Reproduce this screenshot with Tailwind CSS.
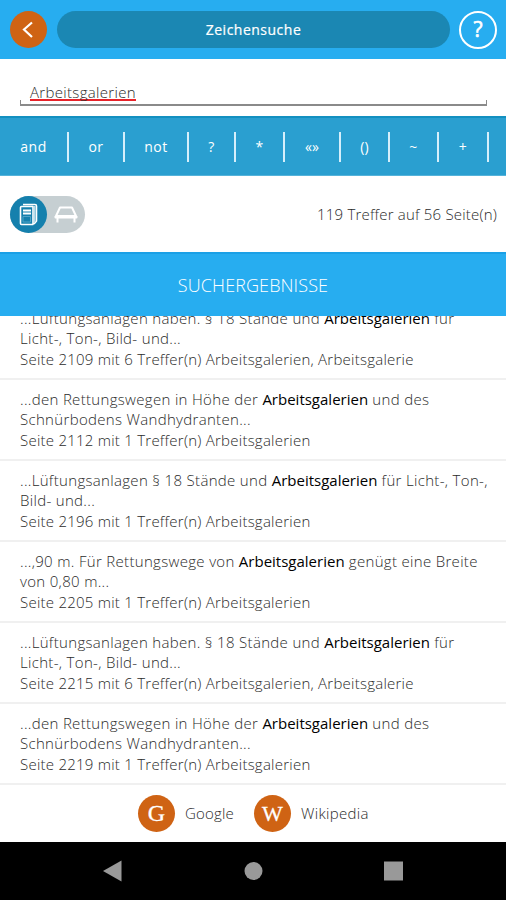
<!DOCTYPE html>
<html lang="de">
<head>
    <meta charset="UTF-8">
    <meta name="viewport" content="width=device-width, initial-scale=1.0">
    <title>Zeichensuche</title>
    <script src="https://cdn.jsdelivr.net/npm/@tailwindcss/browser@4"></script>
</head>
<body class="bg-white">
    <div class="flex h-[900px] w-[506px] flex-col overflow-hidden font-['Open_Sans',sans-serif] text-[15px] font-light tracking-[0.32px] text-[#2b2b2b]">
        <!-- Header -->
        <header class="flex h-[59px] shrink-0 items-center bg-[#27adf0] pl-[10px] pr-[9px] tracking-normal">
            <button class="flex size-[37px] items-center justify-center rounded-full bg-[#cf6314]">
                <svg class="size-[37px]" viewBox="0 0 37 37" fill="none" stroke="#fff" stroke-width="2.200"><path d="M22 11.500 14 18.500l8 7.500"/></svg>
            </button>
            <h1 class="ml-[10px] flex h-[37px] w-[393px] items-center justify-center rounded-full bg-[#1b87b3] text-[14px] font-normal tracking-[0.5px] text-white [-webkit-text-stroke:0.2px_#fff]">Zeichensuche</h1>
            <button class="ml-auto flex size-[38px] items-center justify-center rounded-full border-2 border-white text-[21px] font-normal text-white [-webkit-text-stroke:0.6px_#fff]">?</button>
        </header>

        <!-- Search field -->
        <div class="h-[57px] shrink-0 px-[20px] pt-[22px]">
            <div class="h-[24px] px-[10px] leading-[22px]"><span class="inline-block h-[20px] border-b-2 border-[#e8232a]">Arbeitsgalerien</span></div>
            <div class="-mt-[5px] h-[6px] w-[467px] border-x border-b-2 border-[#8a8a8a]"></div>
        </div>

        <!-- Operators -->
        <nav class="flex h-[60px] shrink-0 items-center border-b border-t-2 border-b-[#55b3da] border-t-[#1390c0] bg-[#2a9fd0] text-[14px] font-normal tracking-[0.5px] text-white *:flex *:h-[30px] *:items-center *:justify-center *:border-r-2 *:border-[#d5effb]">
            <button class="w-[69px]">and</button>
            <button class="w-[56px]">or</button>
            <button class="w-[64px]">not</button>
            <button class="w-[47px]">?</button>
            <button class="w-[49px]">*</button>
            <button class="w-[56px] tracking-normal">«»</button>
            <button class="w-[49px] tracking-normal">()</button>
            <button class="w-[49px]">~</button>
            <button class="w-[50px]">+</button>
        </nav>

        <!-- Toggle and hit count -->
        <div class="flex h-[76px] shrink-0 items-center justify-between pl-[10px] pr-[9px]">
            <div class="flex h-[37px] w-[75px] rounded-full bg-[#c6cfd2]">
                <div class="flex size-[37px] items-center justify-center rounded-full bg-[#1580ad]">
                    <svg class="size-[37px]" viewBox="0 0 37 37" fill="none" stroke="#fff" stroke-width="1.600" stroke-linejoin="round">
                        <path d="M11.500 10.500h11.500v18H11.500q-1 0-1-1v-16q0-1 1-1zM13 8.500h12q1.500 0 1.500 1.500v15l-2.500 3"/>
                        <path d="M24.800 10v16" stroke="#b9dcea"/>
                        <path d="M13 14.500h8M13 17.500h8" stroke-width="1.800"/>
                        <path d="M13 20.500h7.500v5.500H13z" stroke-width=".8" stroke="#5facce"/>
                    </svg>
                </div>
                <svg class="h-[37px] w-[38px]" viewBox="0 0 38 37" fill="none" stroke="#fff" stroke-width="2" stroke-linejoin="round">
                    <path d="M13 11.500h12l4 8.500H9zM8.500 20v1.500h21V20M10.500 21v5.500M27.500 21v5.500"/>
                </svg>
            </div>
            <p class="tracking-[0.19px]">119 Treffer auf 56 Seite(n)</p>
        </div>

        <h2 class="flex h-[64px] shrink-0 items-center justify-center border-t-2 border-[#1ba0e6] bg-[#27adf0] text-[18px] tracking-[0.1px] text-white">SUCHERGEBNISSE</h2>

        <!-- Result list, scrolled a little -->
        <main class="flex h-[469px] shrink-0 flex-col justify-end overflow-hidden leading-[20.300px] *:h-[81px] *:shrink-0 *:whitespace-nowrap *:border-b-2 *:border-[#f0f0f0] *:pl-[20px] *:pt-[9px] [&_b]:font-normal [&_b]:tracking-normal [&_b]:text-black [&_span]:tracking-[0.24px]">
            <p>...Lüftungsanlagen haben. § 18 Stände und <b>Arbeitsgalerien</b> für<br>Licht-, Ton-, Bild- und...<br><span>Seite 2109 mit 6 Treffer(n) Arbeitsgalerien, Arbeitsgalerie</span></p>
            <p>...den Rettungswegen in Höhe der <b>Arbeitsgalerien</b> und des<br>Schnürbodens Wandhydranten...<br><span>Seite 2112 mit 1 Treffer(n) Arbeitsgalerien</span></p>
            <p>...Lüftungsanlagen § 18 Stände und <b>Arbeitsgalerien</b> für Licht-, Ton-,<br>Bild- und...<br><span>Seite 2196 mit 1 Treffer(n) Arbeitsgalerien</span></p>
            <p>...,90 m. Für Rettungswege von <b>Arbeitsgalerien</b> genügt eine Breite<br>von 0,80 m...<br><span>Seite 2205 mit 1 Treffer(n) Arbeitsgalerien</span></p>
            <p>...Lüftungsanlagen haben. § 18 Stände und <b>Arbeitsgalerien</b> für<br>Licht-, Ton-, Bild- und...<br><span>Seite 2215 mit 6 Treffer(n) Arbeitsgalerien, Arbeitsgalerie</span></p>
            <p>...den Rettungswegen in Höhe der <b>Arbeitsgalerien</b> und des<br>Schnürbodens Wandhydranten...<br><span>Seite 2219 mit 1 Treffer(n) Arbeitsgalerien</span></p>
        </main>

        <!-- External search -->
        <div class="flex h-[57px] shrink-0 items-center pl-[138px]">
            <span class="flex size-[37px] items-center justify-center rounded-full bg-[#cf6314] pb-[2px] font-['Liberation_Serif',serif] text-[24px] font-normal text-white [-webkit-text-stroke:0.3px_#fff]">G</span>
            <span class="ml-[10px] w-[69px] tracking-[0.2px]">Google</span>
            <span class="flex size-[37px] items-center justify-center rounded-full bg-[#cf6314] font-['Liberation_Serif',serif] text-[22px] font-normal text-white [-webkit-text-stroke:0.3px_#fff]">W</span>
            <span class="ml-[10px]">Wikipedia</span>
        </div>

        <!-- Android navigation bar -->
        <footer class="flex h-[58px] shrink-0 bg-black">
            <svg class="h-[58px] w-[506px]" viewBox="0 0 506 58" fill="#999"><path d="M103 29l18.500-10.500v21z"/><circle cx="253.500" cy="29" r="9"/><path d="M384 19.500h19v19h-19z"/></svg>
        </footer>
    </div>
</body>
</html>
